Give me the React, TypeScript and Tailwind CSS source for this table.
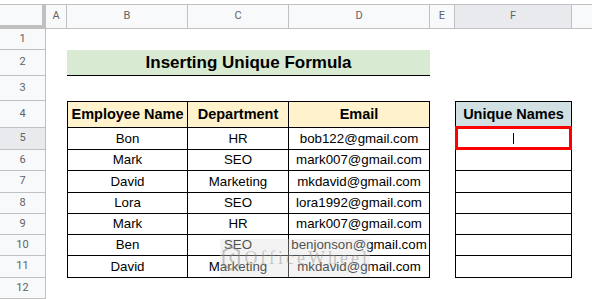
import { FC, ReactNode } from 'react';

const people = [
  ['Bon', 'HR', 'bob122@gmail.com', 'h-[22px]'],
  ['Mark', 'SEO', 'mark007@gmail.com', 'h-[21px]'],
  ['David', 'Marketing', 'mkdavid@gmail.com', 'h-[22px]'],
  ['Lora', 'SEO', 'lora1992@gmail.com', 'h-[21px]'],
  ['Mark', 'HR', 'mark007@gmail.com', 'h-[21px]'],
  ['Ben', 'SEO', 'benjonson@gmail.com', 'h-[21px]'],
  ['David', 'Marketing', 'mkdavid@gmail.com', 'h-[22px]'],
];

const Row: FC<{ n: number; h: string; active?: boolean; children?: ReactNode }> = ({ n, h, active, children }) => (
  <div className={`flex ${h}`}>
    <div
      className={`w-[46px] shrink-0 border-r border-b border-[#c0c0c0] flex items-center justify-center font-['Roboto',sans-serif] text-[11px] text-[#5f6368] ${
        active ? 'bg-[#e8eaed]' : 'bg-[#f8f9fa]'
      }`}
    >
      {n}
    </div>
    {children}
  </div>
);

const ColumnHeader: FC = () => {
  const cols = [
    ['A', 'w-[21px]', false],
    ['B', 'w-[121px]', false],
    ['C', 'w-[101px]', false],
    ['D', 'w-[141px]', false],
    ['E', 'w-[25px]', false],
    ['F', 'w-[117px]', true],
  ] as const;
  return (
    <div className="flex h-[25px] border-t border-[#c0c0c0] font-['Roboto',sans-serif] text-[11px] text-[#5f6368]">
      <div className="w-[46px] shrink-0 bg-[#f8f9fa] border-r-4 border-b-4 border-[#c0c0c0]" />
      {cols.map(([label, w, active]) => (
        <div
          key={label}
          className={`${w} shrink-0 border-r border-b border-[#c0c0c0] flex items-center justify-center ${
            active ? 'bg-[#e8eaed]' : 'bg-[#f8f9fa]'
          }`}
        >
          {label}
        </div>
      ))}
      <div className="flex-1 bg-[#f8f9fa] border-b border-[#c0c0c0]" />
    </div>
  );
};

const cell = 'shrink-0 flex items-center justify-center whitespace-nowrap border-r border-b border-black';

export default function App() {
  return (
    <div className="relative w-[592px] h-[299px] overflow-hidden bg-white text-black font-['Liberation_Sans',Arial,sans-serif]">
      <div className="h-[4px]" />
      <ColumnHeader />

      <Row n={1} h="h-[21px]" />
      <Row n={2} h="h-[26px]">
        <div className="w-[21px] shrink-0" />
        <div className="w-[363px] shrink-0 bg-[#d9ead3] border-b border-black flex items-center justify-center text-[17px] font-bold">
          Inserting Unique Formula
        </div>
      </Row>
      <Row n={3} h="h-[25px]" />

      <Row n={4} h="h-[27px]">
        <div className="w-[21px] shrink-0" />
        <div className={`${cell} w-[121px] border-l border-t bg-[#fff2cc] text-[14.5px] font-bold`}>Employee Name</div>
        <div className={`${cell} w-[101px] border-t bg-[#fff2cc] text-[14.5px] font-bold`}>Department</div>
        <div className={`${cell} w-[141px] border-t bg-[#fff2cc] text-[14.5px] font-bold`}>Email</div>
        <div className="w-[25px] shrink-0" />
        <div className={`${cell} w-[117px] border-l border-t bg-[#d0e0e3] text-[14.5px] font-bold`}>Unique Names</div>
      </Row>

      {people.map(([name, dept, email, h], i) => (
        <Row key={i} n={i + 5} h={h} active={i === 0}>
          <div className="w-[21px] shrink-0" />
          <div className={`${cell} w-[121px] border-l text-[13.3px]`}>{name}</div>
          <div className={`${cell} w-[101px] text-[13.3px]`}>{dept}</div>
          <div className={`${cell} w-[141px] text-[13.3px]`}>{email}</div>
          <div className="w-[25px] shrink-0" />
          <div className={`${cell} w-[117px] border-l relative`}>
            {i === 0 && (
              <>
                <div className="absolute -top-[2px] -left-px -right-px -bottom-px border-[3px] border-[#ff0000]" />
                <div className="absolute left-[57px] top-[5px] h-[11px] w-px bg-black" />
              </>
            )}
          </div>
        </Row>
      ))}

      <Row n={12} h="h-[21px]" />

      {/* watermark */}
      <div className="absolute left-[220px] top-[239px] w-[150px] h-[38px] bg-[#dcdcdc]/35 flex items-center gap-[4px] pl-[2px]">
        <svg width="24" height="34" viewBox="0 0 24 34" className="opacity-50">
          <path d="M12 2 L22 8 L22 26 L12 32 L2 26 L2 8 Z" fill="none" stroke="#8a8a8a" strokeWidth="2.5" />
          <path d="M16 12 A5 5 0 1 0 16 22" fill="none" stroke="#8a8a8a" strokeWidth="2.5" />
        </svg>
        <span className="font-['Liberation_Serif',serif] text-[18px] tracking-[3px] text-[#8a8a8a]/45">OfficeWheel</span>
      </div>
    </div>
  );
}
